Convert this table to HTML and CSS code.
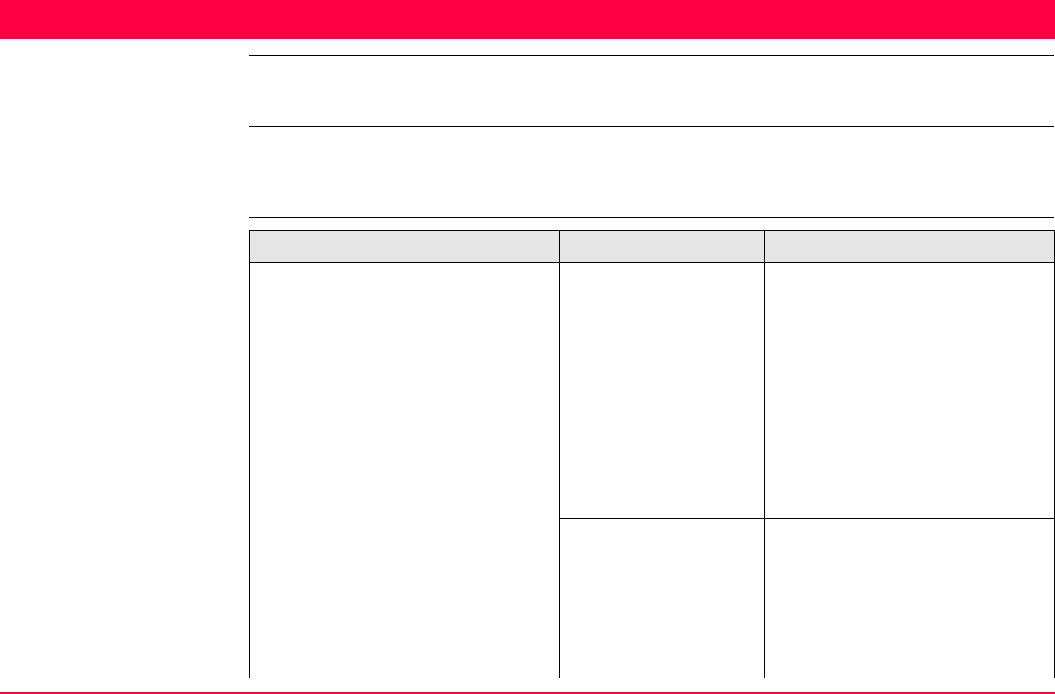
FILE: index.html
```html
<!DOCTYPE html>
<html lang="en">
<head>
<meta charset="utf-8">
<title>Page</title>
<link rel="stylesheet" href="styles.css">
</head>
<body>
<header class="topbar"></header>
<main class="content">
  <div class="rule rule-first"></div>
  <div class="rule rule-second"></div>
  <div class="rule rule-third"></div>
  <div class="spec-table">
    <div class="cell head"></div>
    <div class="cell head"></div>
    <div class="cell head"></div>
    <div class="cell span-rows"></div>
    <div class="cell row-one"></div>
    <div class="cell row-one"></div>
    <div class="cell last"></div>
    <div class="cell last"></div>
  </div>
</main>
<footer class="bottom-rule"></footer>
</body>
</html>
```
FILE: styles.css
```css
html, body {
  margin: 0;
  padding: 0;
  background: #ffffff;
  font-family: "Liberation Sans", Arial, sans-serif;
}
body {
  width: 1055px;
  height: 694px;
  overflow: hidden;
  display: flex;
  flex-direction: column;
}
.topbar {
  height: 39px;
  background: #ff0043;
  flex: none;
}
.content {
  padding-left: 249px;
  padding-right: 1px;
  flex: none;
}
.rule {
  height: 1px;
  background: #000;
  width: 805px;
}
.rule-first { margin-top: 16px; }
.rule-second { margin-top: 70px; }
.rule-third { margin-top: 90px; }
.spec-table {
  margin-top: 12px;
  display: grid;
  grid-template-columns: 310px 205px 290px;
  grid-template-rows: 32px 256px 159px;
  border-top: 1px solid #000;
  border-left: 1px solid #000;
  width: 805px;
}
.cell {
  border-right: 1px solid #000;
  border-bottom: 1px solid #000;
  box-sizing: border-box;
}
.head {
  background: #e5e5e5;
}
.span-rows {
  grid-row: 2 / 4;
  border-bottom: none;
}
.last {
  border-bottom: none;
}
.bottom-rule {
  margin-top: 14px;
  height: 2px;
  background: #ff0043;
  flex: none;
}
```
